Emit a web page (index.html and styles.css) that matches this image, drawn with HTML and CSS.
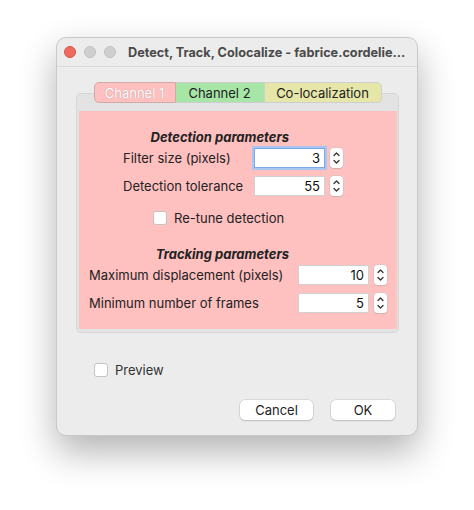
FILE: index.html
```html
<!DOCTYPE html>
<html>
<head>
  <title>Detect, Track, Colocalize</title>
  <link rel="stylesheet" href="styles.css">
</head>
<body>
  <div class="window">
    <div class="titlebar">
      <span class="light red"></span>
      <span class="light"></span>
      <span class="light"></span>
      <span class="title">Detect, Track, Colocalize - fabrice.cordelie...</span>
    </div>

    <div class="tabpane">
      <div class="tabs">
        <div class="tab tab-ch1">Channel 1</div>
        <div class="tab tab-ch2">Channel 2</div>
        <div class="tab tab-coloc">Co-localization</div>
      </div>
      <div class="panel">
        <div class="pink">
          <div class="heading">Detection parameters</div>
          <div class="rows rows-detect">
            <label>Filter size (pixels)</label>
            <div class="field focus">3</div>
            <div class="stepper"><svg width="13" height="20" viewBox="0 0 13 20"><path d="M4 7.5 L6.5 5 L9 7.5 M4 12.5 L6.5 15 L9 12.5" fill="none" stroke="#333" stroke-width="1.3" stroke-linecap="round" stroke-linejoin="round"/></svg></div>
            <label>Detection tolerance</label>
            <div class="field">55</div>
            <div class="stepper"><svg width="13" height="20" viewBox="0 0 13 20"><path d="M4 7.5 L6.5 5 L9 7.5 M4 12.5 L6.5 15 L9 12.5" fill="none" stroke="#333" stroke-width="1.3" stroke-linecap="round" stroke-linejoin="round"/></svg></div>
          </div>
          <div class="check check-retune"><span class="box"></span>Re-tune detection</div>

          <div class="heading heading-track">Tracking parameters</div>
          <div class="rows rows-track">
            <label>Maximum displacement (pixels)</label>
            <div class="field">10</div>
            <div class="stepper"><svg width="13" height="20" viewBox="0 0 13 20"><path d="M4 7.5 L6.5 5 L9 7.5 M4 12.5 L6.5 15 L9 12.5" fill="none" stroke="#333" stroke-width="1.3" stroke-linecap="round" stroke-linejoin="round"/></svg></div>
            <label>Minimum number of frames</label>
            <div class="field">5</div>
            <div class="stepper"><svg width="13" height="20" viewBox="0 0 13 20"><path d="M4 7.5 L6.5 5 L9 7.5 M4 12.5 L6.5 15 L9 12.5" fill="none" stroke="#333" stroke-width="1.3" stroke-linecap="round" stroke-linejoin="round"/></svg></div>
          </div>
        </div>
      </div>
    </div>

    <div class="check check-preview"><span class="box"></span>Preview</div>

    <div class="buttons">
      <button class="btn btn-cancel">Cancel</button>
      <button class="btn btn-ok">OK</button>
    </div>
  </div>
</body>
</html>
```

FILE: styles.css
```css
* {
  margin: 0;
  padding: 0;
  box-sizing: border-box;
}

body {
  font-family: "Inter", "Liberation Sans", sans-serif;
  font-size: 13px;
  color: #222222;
  background-color: #ffffff;
  padding: 37px 0 74px 56px;
}

.window {
  width: 362px;
  height: 399px;
  border-radius: 10px;
  background-color: #ececec;
  border: 1px solid #c8c8c8;
  box-shadow: 0 16px 36px rgba(0, 0, 0, 0.3);
}

.titlebar {
  height: 29px;
  display: flex;
  align-items: center;
  padding-left: 7px;
  border-bottom: 1px solid #d9d9d9;
}

.light {
  width: 12px;
  height: 12px;
  border-radius: 50%;
  background-color: #cfcfcf;
  border: 1px solid #c2c2c2;
  margin-right: 8px;
}

.light.red {
  background-color: #ec6a5e;
  border-color: #d65448;
}

.title {
  margin-left: 4px;
  font-weight: bold;
  font-size: 12.7px;
  color: #4a4a4a;
  white-space: nowrap;
}

.tabpane {
  margin: 15px 0 0 19px;
  width: 323px;
}

.tabs {
  display: flex;
  justify-content: center;
  position: relative;
  z-index: 1;
}

.tab {
  height: 21px;
  line-height: 20px;
  text-align: center;
  border: 1px solid #cfcfcf;
}

.tab-ch1 {
  width: 82px;
  background-color: #ffc0c0;
  color: #ffffff;
  border-radius: 5px 0 0 5px;
  border-color: #d4a8a8;
  text-shadow: 0 0 1px #a88;
}

.tab-ch2 {
  width: 88px;
  background-color: #a8e6a8;
  border-left: none;
  border-right: none;
}

.tab-coloc {
  width: 118px;
  background-color: #e6e6a8;
  border-radius: 0 5px 5px 0;
}

.panel {
  margin-top: -10px;
  padding: 17px 1px 3px 2px;
  background-color: #e3e3e3;
  border: 1px solid #d6d6d6;
  border-radius: 5px;
}

.pink {
  background-color: #ffc0c0;
  height: 218px;
  padding-top: 18px;
}

.heading {
  width: 210px;
  text-align: right;
  font-weight: bold;
  font-style: italic;
  line-height: 16px;
}

.rows {
  display: grid;
  row-gap: 8px;
  align-items: center;
  margin-top: 3px;
}

.rows-detect {
  margin-left: 44px;
  grid-template-columns: 131px 71px 17px;
}

.rows-track {
  margin-left: 10px;
  grid-template-columns: 209px 71px 17px;
}

.field {
  height: 20px;
  line-height: 19px;
  background-color: #ffffff;
  border: 1px solid #d0d0d0;
  text-align: right;
  padding-right: 4px;
  color: #111111;
}

.field.focus {
  border-color: #7fa7e6;
  box-shadow: 0 0 0 2px #a9c6f2;
}

.stepper {
  margin-left: 5px;
  width: 13px;
  height: 20px;
  background-color: #ffffff;
  border-radius: 4px;
  box-shadow: 0 0 0 0.5px #c4c4c4, 0 1px 1px rgba(0, 0, 0, 0.15);
}

.stepper svg {
  display: block;
}

.check {
  display: flex;
  align-items: center;
  line-height: 16px;
}

.box {
  width: 14px;
  height: 14px;
  border-radius: 3px;
  background-color: #ffffff;
  border: 1px solid #c4c4c4;
  margin-right: 7px;
}

.check-retune {
  margin: 14px 0 0 74px;
}

.heading-track {
  margin-top: 20px;
}

.check-preview {
  margin: 29px 0 0 37px;
  color: #333333;
}

.buttons {
  display: flex;
  justify-content: flex-end;
  gap: 18px;
  margin: 22px 22px 0 0;
}

.btn {
  font-family: inherit;
  font-size: 13px;
  height: 20px;
  background-color: #ffffff;
  border: none;
  border-radius: 5px;
  color: #222222;
  box-shadow: 0 0 0 0.5px #c6c6c6, 0 1px 1.5px rgba(0, 0, 0, 0.2);
}

.btn-cancel {
  width: 73px;
}

.btn-ok {
  width: 64px;
}
```
